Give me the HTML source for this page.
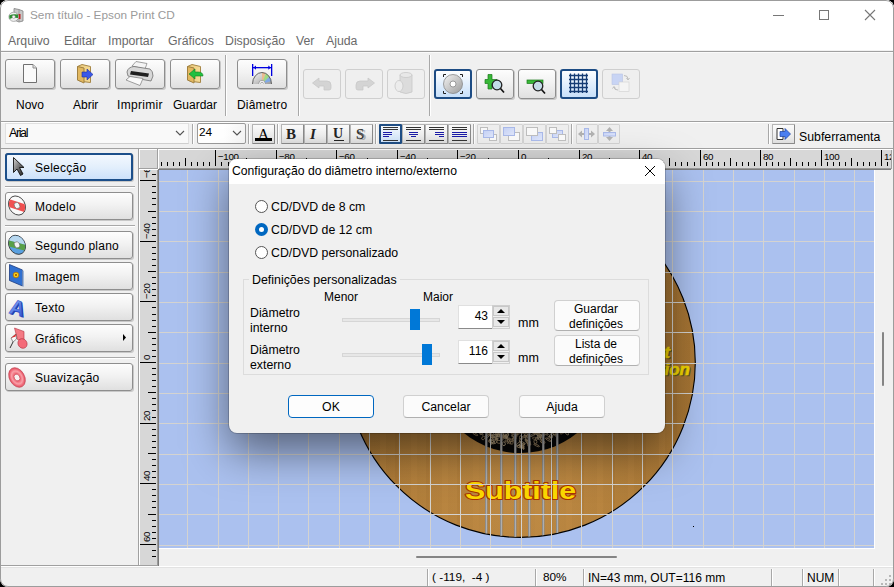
<!DOCTYPE html>
<html><head><meta charset="utf-8">
<style>
*{box-sizing:border-box;margin:0;padding:0}
html,body{width:894px;height:587px;overflow:hidden;background:#000;font-family:"Liberation Sans",sans-serif;}
.a{position:absolute}
#win{position:absolute;left:0;top:0;width:894px;height:587px;background:#f0f0f0;border-radius:8px;overflow:hidden}
#frame{position:absolute;left:0;top:0;width:894px;height:587px;border:1px solid #9c9c9c;border-radius:8px}
.t{position:absolute;white-space:nowrap;line-height:1}
.tb{position:absolute;border:1px solid #8e8e8e;border-radius:3px;background:linear-gradient(#fdfdfd,#f2f2f2 45%,#e0e0e0);box-shadow:1px 1px 0 #c8c8c8}
.tbs{position:absolute;border:2px solid #1d4c84;border-radius:3px;background:linear-gradient(#fdfeff,#e2effd 50%,#c8e0fa)}
.sb{position:absolute;border:1px solid #b4b4b4;border-right-color:#8a8a8a;border-bottom-color:#8a8a8a;border-radius:1px;background:linear-gradient(#fbfbfb,#ededed 60%,#dedede)}
.sbs{position:absolute;border:2px solid #1f4e85;border-radius:1px;background:linear-gradient(#f4f9ff,#d0e4fa)}
.sbd{position:absolute;border:1px solid #d4d4d4;border-radius:1px;background:#efefef}
.tbd{position:absolute;border:1px solid #cfcfcf;border-radius:3px;background:#efefef}
.sep{position:absolute;width:2px;border-left:1px solid #a8a8a8;border-right:1px solid #fff}
.lbl{font-size:12px;color:#000}
</style></head><body>
<div id="win">
<!-- title bar -->
<div class="a" style="left:0;top:0;width:894px;height:51px;background:#fff"></div>
<div class="a" style="left:0;top:50px;width:894px;height:1px;background:#f2f2f2"></div>
<div class="a" style="left:0;top:51px;width:894px;height:1px;background:#a0a0a0"></div>
<div class="a" style="left:0;top:52px;width:894px;height:1px;background:#fafafa"></div>
<div class="t" style="left:30px;top:10px;font-size:11.8px;color:#9a9a9a">Sem título - Epson Print CD</div>
<div class="t" style="left:8px;top:35px;font-size:12.3px;color:#6a6a6a">Arquivo</div>
<div class="t" style="left:64px;top:35px;font-size:12.3px;color:#6a6a6a">Editar</div>
<div class="t" style="left:108px;top:35px;font-size:12.3px;color:#6a6a6a">Importar</div>
<div class="t" style="left:168px;top:35px;font-size:12.3px;color:#6a6a6a">Gráficos</div>
<div class="t" style="left:225px;top:35px;font-size:12.3px;color:#6a6a6a">Disposição</div>
<div class="t" style="left:296px;top:35px;font-size:12.3px;color:#6a6a6a">Ver</div>
<div class="t" style="left:326px;top:35px;font-size:12.3px;color:#6a6a6a">Ajuda</div>

<!-- main toolbar -->
<div class="a" style="left:0;top:121px;width:894px;height:1px;background:#a0a0a0"></div>
<div class="a" style="left:0;top:122px;width:894px;height:1px;background:#fff"></div>
<div class="tb" style="left:5px;top:59px;width:50px;height:30px"></div>
<div class="tb" style="left:60px;top:59px;width:50px;height:30px"></div>
<div class="tb" style="left:115px;top:59px;width:50px;height:30px"></div>
<div class="tb" style="left:170px;top:59px;width:50px;height:30px"></div>
<div class="sep" style="left:225px;top:55px;height:61px"></div>
<div class="tb" style="left:237px;top:59px;width:50px;height:30px"></div>
<div class="sep" style="left:298px;top:55px;height:61px"></div>
<div class="tbd" style="left:303px;top:69px;width:38px;height:30px"></div>
<div class="tbd" style="left:345px;top:69px;width:38px;height:30px"></div>
<div class="tbd" style="left:387px;top:69px;width:38px;height:30px"></div>
<div class="sep" style="left:429px;top:55px;height:61px"></div>
<div class="tbs" style="left:434px;top:69px;width:38px;height:30px"></div>
<div class="tb" style="left:476px;top:69px;width:38px;height:30px"></div>
<div class="tb" style="left:518px;top:69px;width:38px;height:30px"></div>
<div class="tbs" style="left:560px;top:69px;width:38px;height:30px"></div>
<div class="tbd" style="left:602px;top:69px;width:38px;height:30px"></div>
<div class="t lbl" style="left:16px;top:99px">Novo</div>
<div class="t lbl" style="left:73px;top:99px">Abrir</div>
<div class="t lbl" style="left:117px;top:99px;letter-spacing:0.3px">Imprimir</div>
<div class="t lbl" style="left:173px;top:99px">Guardar</div>
<div class="t lbl" style="left:237px;top:99px;letter-spacing:0.2px">Diâmetro</div>

<!-- font row -->
<div class="a" style="left:0;top:148px;width:894px;height:1px;background:#a0a0a0"></div>
<div class="a" style="left:5px;top:123px;width:184px;height:21px;background:#f9f9f9;border:1px solid #e0e0e0;border-bottom-color:#cfcfcf"></div>
<div class="t" style="left:9px;top:127px;font-size:12.5px;letter-spacing:-1.4px;color:#000">Arial</div>
<svg class="a" style="left:175px;top:130px" width="10" height="7"><path d="M1 1L5 5L9 1" stroke="#555" fill="none" stroke-width="1.1"/></svg>
<div class="sep" style="left:192px;top:124px;height:20px"></div>
<div class="a" style="left:197px;top:123px;width:49px;height:21px;background:linear-gradient(90deg,#fff 0,#fff 55%,#f5f5f5);border:1px solid #9a9a9a;border-radius:2px"></div>
<div class="t" style="left:199px;top:127px;font-size:11.8px;color:#000">24</div>
<svg class="a" style="left:232px;top:130px" width="10" height="7"><path d="M1 1L5 5L9 1" stroke="#555" fill="none" stroke-width="1.1"/></svg>
<div class="sep" style="left:248px;top:124px;height:20px"></div>
<div class="sb" style="left:252px;top:124px;width:23px;height:20px"></div>
<div class="sep" style="left:277px;top:124px;height:20px"></div>
<div class="sb" style="left:281px;top:124px;width:23px;height:20px"></div>
<div class="sb" style="left:304px;top:124px;width:23px;height:20px"></div>
<div class="sb" style="left:327px;top:124px;width:23px;height:20px"></div>
<div class="sb" style="left:350px;top:124px;width:23px;height:20px"></div>
<div class="sep" style="left:375px;top:124px;height:20px"></div>
<div class="sbs" style="left:379px;top:124px;width:23px;height:20px"></div>
<div class="sb" style="left:402px;top:124px;width:23px;height:20px"></div>
<div class="sb" style="left:425px;top:124px;width:23px;height:20px"></div>
<div class="sb" style="left:448px;top:124px;width:23px;height:20px"></div>
<div class="sep" style="left:473px;top:124px;height:20px"></div>
<div class="sbd" style="left:477px;top:124px;width:23px;height:20px"></div>
<div class="sbd" style="left:500px;top:124px;width:23px;height:20px"></div>
<div class="sbd" style="left:523px;top:124px;width:23px;height:20px"></div>
<div class="sbd" style="left:546px;top:124px;width:23px;height:20px"></div>
<div class="sep" style="left:571px;top:124px;height:20px"></div>
<div class="sbd" style="left:576px;top:124px;width:22px;height:20px"></div>
<div class="sbd" style="left:598px;top:124px;width:22px;height:20px"></div>
<div class="sep" style="left:768px;top:124px;height:20px"></div>
<div class="sb" style="left:772px;top:124px;width:23px;height:20px"></div>
<div class="t lbl" style="left:799px;top:131px;font-size:12.3px">Subferramenta</div>


<!-- left panel -->
<div class="tb" style="left:5px;top:153px;width:128px;height:28px"></div>
<div class="a" style="left:5px;top:153px;width:128px;height:28px;border:2px solid #1c4f8a;border-radius:3px;background:linear-gradient(#f3f8fe,#e3effc 50%,#cde2fb)"></div>
<div class="a" style="left:5px;top:186px;width:130px;height:1px;background:#a8a8a8"></div>
<div class="a" style="left:5px;top:187px;width:130px;height:1px;background:#fff"></div>
<div class="tb" style="left:5px;top:192px;width:128px;height:28px"></div>
<div class="a" style="left:5px;top:225px;width:130px;height:1px;background:#a8a8a8"></div>
<div class="a" style="left:5px;top:226px;width:130px;height:1px;background:#fff"></div>
<div class="tb" style="left:5px;top:231px;width:128px;height:28px"></div>
<div class="tb" style="left:5px;top:262px;width:128px;height:28px"></div>
<div class="tb" style="left:5px;top:293px;width:128px;height:28px"></div>
<div class="tb" style="left:5px;top:324px;width:128px;height:28px"></div>
<div class="a" style="left:5px;top:357px;width:130px;height:1px;background:#a8a8a8"></div>
<div class="a" style="left:5px;top:358px;width:130px;height:1px;background:#fff"></div>
<div class="tb" style="left:5px;top:363px;width:128px;height:28px"></div>
<div class="t lbl" style="left:35px;top:162px;letter-spacing:0.25px">Selecção</div>
<div class="t lbl" style="left:35px;top:201px;letter-spacing:0.25px">Modelo</div>
<div class="t lbl" style="left:35px;top:240px;letter-spacing:0.25px">Segundo plano</div>
<div class="t lbl" style="left:35px;top:271px;letter-spacing:0.25px">Imagem</div>
<div class="t lbl" style="left:35px;top:302px;letter-spacing:0.25px">Texto</div>
<div class="t lbl" style="left:35px;top:333px;letter-spacing:0.25px">Gráficos</div>
<div class="t lbl" style="left:35px;top:372px;letter-spacing:0.25px">Suavização</div>
<svg class="a" style="left:122px;top:334px" width="5" height="7"><path d="M1 0L4 3.5L1 7Z" fill="#000"/></svg>
<!-- main area border -->
<div class="a" style="left:138px;top:149px;width:1px;height:417px;background:#a0a0a0"></div>
<div class="a" style="left:139px;top:149px;width:755px;height:1px;background:#fff"></div>
<div class="a" style="left:139px;top:149px;width:1px;height:417px;background:#fff"></div>
<!-- rulers -->
<div class="a" style="left:140px;top:150px;width:751px;height:18px;background:#d7d7d7"></div>
<div class="a" style="left:140px;top:150px;width:17px;height:415px;background:#d7d7d7"></div>
<div class="a" style="left:157px;top:149px;width:1px;height:20px;background:#a0a0a0"></div>
<div class="a" style="left:158px;top:149px;width:1px;height:20px;background:#fff"></div>
<div class="a" style="left:139px;top:168px;width:19px;height:1px;background:#a0a0a0"></div>
<div class="a" style="left:139px;top:169px;width:19px;height:1px;background:#fff"></div>
<div class="a" style="left:159px;top:168px;width:732px;height:1px;background:#9a9a9a"></div>
<div class="a" style="left:158px;top:169px;width:733px;height:1px;background:#7a7a7a"></div>
<div class="a" style="left:891px;top:150px;width:1px;height:19px;background:#a0a0a0"></div>
<div class="a" style="left:157px;top:170px;width:1px;height:395px;background:#9a9a9a"></div>
<div class="a" style="left:158px;top:170px;width:1px;height:396px;background:#7a7a7a"></div>
<div class="a" style="left:0;top:565px;width:158px;height:1px;background:#a0a0a0"></div>
<div class="a" style="left:159px;top:548px;width:715px;height:1px;background:#fff"></div>
<div class="a" style="left:874px;top:170px;width:1px;height:379px;background:#fff"></div>
<!-- canvas -->
<svg class="a" style="left:159px;top:170px" width="715" height="378">
<rect x="0" y="0" width="715" height="378" fill="#abc1ef"/>
<defs>
<radialGradient id="wood" cx="0.5" cy="0.85" r="0.75"><stop offset="0" stop-color="#bb853c"/><stop offset="0.6" stop-color="#b27d37"/><stop offset="1" stop-color="#ae7a36"/></radialGradient>
<linearGradient id="woodh" x1="0" y1="0" x2="1" y2="0"><stop offset="0" stop-color="#000" stop-opacity="0.06"/><stop offset="0.5" stop-color="#fff" stop-opacity="0.04"/><stop offset="1" stop-color="#000" stop-opacity="0.06"/></linearGradient>
<pattern id="grain" width="31" height="400" patternUnits="userSpaceOnUse">
<rect x="4" width="6" height="400" fill="#c8924a" opacity="0.18"/><rect x="19" width="3" height="400" fill="#8a5a24" opacity="0.12"/></pattern>
<linearGradient id="str" x1="0" y1="0" x2="1" y2="0"><stop offset="0" stop-color="#707070"/><stop offset="0.5" stop-color="#b8b8b8"/><stop offset="1" stop-color="#888"/></linearGradient>

<clipPath id="cdclip"><circle cx="361.5" cy="192.60000000000002" r="174.3"/></clipPath></defs>
<circle cx="361.5" cy="192.60000000000002" r="174.8" fill="url(#wood)"/>
<circle cx="361.5" cy="192.60000000000002" r="174.8" fill="url(#woodh)"/>
<circle cx="361.5" cy="192.60000000000002" r="174.8" fill="url(#grain)"/>
<circle cx="361.5" cy="192.60000000000002" r="174.8" fill="none" stroke="#000" stroke-width="1.1"/>
<circle cx="361.5" cy="192.60000000000002" r="90.5" fill="#080808"/>
<g opacity="0.9"><ellipse cx="355.4" cy="262.6" rx="1.3" ry="1.1" transform="rotate(7 355.4 262.6)" fill="none" stroke="#a88e68" stroke-width="0.8"/><ellipse cx="374.9" cy="258.7" rx="2.3" ry="0.7" transform="rotate(102 374.9 258.7)" fill="none" stroke="#bfa37a" stroke-width="0.8"/><ellipse cx="337.9" cy="263.9" rx="1.3" ry="1.2" transform="rotate(9 337.9 263.9)" fill="none" stroke="#bfa37a" stroke-width="0.8"/><ellipse cx="346.4" cy="267.5" rx="1.9" ry="1.1" transform="rotate(11 346.4 267.5)" fill="none" stroke="#cdb48a" stroke-width="0.8"/><ellipse cx="340.5" cy="262.7" rx="2.3" ry="1.4" transform="rotate(84 340.5 262.7)" fill="none" stroke="#a88e68" stroke-width="0.8"/><ellipse cx="362.3" cy="262.3" rx="2.1" ry="1.2" transform="rotate(13 362.3 262.3)" fill="none" stroke="#a88e68" stroke-width="0.8"/><ellipse cx="350.2" cy="271.6" rx="2.8" ry="0.9" transform="rotate(63 350.2 271.6)" fill="none" stroke="#a88e68" stroke-width="0.8"/><ellipse cx="347.5" cy="263.5" rx="2.9" ry="1.5" transform="rotate(85 347.5 263.5)" fill="none" stroke="#cdb48a" stroke-width="0.8"/><ellipse cx="331.8" cy="271.6" rx="2.8" ry="0.9" transform="rotate(69 331.8 271.6)" fill="none" stroke="#d8c29c" stroke-width="0.8"/><ellipse cx="383.0" cy="271.3" rx="1.4" ry="1.0" transform="rotate(99 383.0 271.3)" fill="none" stroke="#bfa37a" stroke-width="0.8"/><ellipse cx="389.2" cy="269.7" rx="3.1" ry="0.8" transform="rotate(32 389.2 269.7)" fill="none" stroke="#bfa37a" stroke-width="0.8"/><ellipse cx="355.1" cy="268.1" rx="1.8" ry="0.7" transform="rotate(155 355.1 268.1)" fill="none" stroke="#cdb48a" stroke-width="0.8"/><ellipse cx="370.1" cy="273.7" rx="3.1" ry="1.3" transform="rotate(101 370.1 273.7)" fill="none" stroke="#a88e68" stroke-width="0.8"/><ellipse cx="405.3" cy="260.3" rx="1.5" ry="0.6" transform="rotate(171 405.3 260.3)" fill="none" stroke="#d8c29c" stroke-width="0.8"/><ellipse cx="358.5" cy="262.5" rx="1.3" ry="0.6" transform="rotate(50 358.5 262.5)" fill="none" stroke="#d8c29c" stroke-width="0.8"/><ellipse cx="391.3" cy="267.1" rx="2.6" ry="0.9" transform="rotate(175 391.3 267.1)" fill="none" stroke="#cdb48a" stroke-width="0.8"/><ellipse cx="336.9" cy="271.1" rx="2.9" ry="1.1" transform="rotate(118 336.9 271.1)" fill="none" stroke="#cdb48a" stroke-width="0.8"/><ellipse cx="382.5" cy="267.7" rx="1.6" ry="1.5" transform="rotate(78 382.5 267.7)" fill="none" stroke="#d8c29c" stroke-width="0.8"/><ellipse cx="368.0" cy="269.1" rx="2.4" ry="1.2" transform="rotate(85 368.0 269.1)" fill="none" stroke="#d8c29c" stroke-width="0.8"/><ellipse cx="352.8" cy="272.9" rx="1.3" ry="1.3" transform="rotate(162 352.8 272.9)" fill="none" stroke="#a88e68" stroke-width="0.8"/><ellipse cx="359.4" cy="274.2" rx="2.8" ry="1.2" transform="rotate(140 359.4 274.2)" fill="none" stroke="#bfa37a" stroke-width="0.8"/><ellipse cx="391.9" cy="259.7" rx="2.3" ry="1.4" transform="rotate(19 391.9 259.7)" fill="none" stroke="#cdb48a" stroke-width="0.8"/><ellipse cx="349.6" cy="270.8" rx="3.0" ry="1.0" transform="rotate(110 349.6 270.8)" fill="none" stroke="#bfa37a" stroke-width="0.8"/><ellipse cx="355.6" cy="265.1" rx="3.1" ry="1.3" transform="rotate(158 355.6 265.1)" fill="none" stroke="#d8c29c" stroke-width="0.8"/><ellipse cx="375.8" cy="262.0" rx="1.8" ry="1.3" transform="rotate(77 375.8 262.0)" fill="none" stroke="#bfa37a" stroke-width="0.8"/><ellipse cx="329.5" cy="265.5" rx="3.0" ry="0.8" transform="rotate(129 329.5 265.5)" fill="none" stroke="#d8c29c" stroke-width="0.8"/><ellipse cx="364.1" cy="276.8" rx="2.9" ry="0.8" transform="rotate(78 364.1 276.8)" fill="none" stroke="#a88e68" stroke-width="0.8"/><ellipse cx="395.1" cy="263.3" rx="1.2" ry="1.2" transform="rotate(79 395.1 263.3)" fill="none" stroke="#cdb48a" stroke-width="0.8"/><ellipse cx="382.0" cy="263.3" rx="1.8" ry="1.6" transform="rotate(20 382.0 263.3)" fill="none" stroke="#bfa37a" stroke-width="0.8"/><ellipse cx="390.0" cy="261.4" rx="3.1" ry="0.9" transform="rotate(23 390.0 261.4)" fill="none" stroke="#bfa37a" stroke-width="0.8"/><ellipse cx="356.4" cy="259.0" rx="2.1" ry="1.3" transform="rotate(49 356.4 259.0)" fill="none" stroke="#cdb48a" stroke-width="0.8"/><ellipse cx="332.6" cy="263.6" rx="2.5" ry="1.1" transform="rotate(160 332.6 263.6)" fill="none" stroke="#d8c29c" stroke-width="0.8"/><ellipse cx="324.3" cy="268.0" rx="1.9" ry="1.4" transform="rotate(127 324.3 268.0)" fill="none" stroke="#bfa37a" stroke-width="0.8"/><ellipse cx="377.6" cy="260.5" rx="1.3" ry="0.7" transform="rotate(13 377.6 260.5)" fill="none" stroke="#d8c29c" stroke-width="0.8"/><ellipse cx="360.3" cy="276.4" rx="2.4" ry="1.3" transform="rotate(8 360.3 276.4)" fill="none" stroke="#bfa37a" stroke-width="0.8"/><ellipse cx="407.2" cy="262.6" rx="3.1" ry="1.1" transform="rotate(44 407.2 262.6)" fill="none" stroke="#d8c29c" stroke-width="0.8"/><ellipse cx="401.0" cy="258.4" rx="1.7" ry="1.4" transform="rotate(16 401.0 258.4)" fill="none" stroke="#cdb48a" stroke-width="0.8"/><ellipse cx="379.1" cy="259.0" rx="2.5" ry="0.7" transform="rotate(172 379.1 259.0)" fill="none" stroke="#bfa37a" stroke-width="0.8"/><ellipse cx="332.2" cy="265.0" rx="3.0" ry="1.0" transform="rotate(59 332.2 265.0)" fill="none" stroke="#a88e68" stroke-width="0.8"/><ellipse cx="337.5" cy="267.3" rx="2.8" ry="0.7" transform="rotate(94 337.5 267.3)" fill="none" stroke="#cdb48a" stroke-width="0.8"/><ellipse cx="338.1" cy="265.0" rx="2.6" ry="1.1" transform="rotate(1 338.1 265.0)" fill="none" stroke="#cdb48a" stroke-width="0.8"/><ellipse cx="354.9" cy="269.2" rx="1.3" ry="1.3" transform="rotate(45 354.9 269.2)" fill="none" stroke="#cdb48a" stroke-width="0.8"/><ellipse cx="335.6" cy="260.2" rx="2.9" ry="0.7" transform="rotate(164 335.6 260.2)" fill="none" stroke="#d8c29c" stroke-width="0.8"/><ellipse cx="329.8" cy="263.4" rx="2.6" ry="0.9" transform="rotate(93 329.8 263.4)" fill="none" stroke="#a88e68" stroke-width="0.8"/><ellipse cx="368.1" cy="271.6" rx="3.2" ry="1.1" transform="rotate(56 368.1 271.6)" fill="none" stroke="#cdb48a" stroke-width="0.8"/><ellipse cx="369.6" cy="272.6" rx="3.1" ry="1.0" transform="rotate(48 369.6 272.6)" fill="none" stroke="#bfa37a" stroke-width="0.8"/><ellipse cx="386.9" cy="263.8" rx="2.5" ry="0.9" transform="rotate(20 386.9 263.8)" fill="none" stroke="#d8c29c" stroke-width="0.8"/><ellipse cx="369.8" cy="260.9" rx="1.5" ry="0.9" transform="rotate(57 369.8 260.9)" fill="none" stroke="#d8c29c" stroke-width="0.8"/><ellipse cx="383.3" cy="260.0" rx="3.2" ry="1.2" transform="rotate(65 383.3 260.0)" fill="none" stroke="#a88e68" stroke-width="0.8"/><ellipse cx="314.0" cy="258.5" rx="1.8" ry="0.7" transform="rotate(119 314.0 258.5)" fill="none" stroke="#bfa37a" stroke-width="0.8"/><ellipse cx="359.7" cy="258.8" rx="1.9" ry="1.6" transform="rotate(159 359.7 258.8)" fill="none" stroke="#a88e68" stroke-width="0.8"/><ellipse cx="352.1" cy="270.2" rx="1.3" ry="1.3" transform="rotate(81 352.1 270.2)" fill="none" stroke="#bfa37a" stroke-width="0.8"/><ellipse cx="315.2" cy="262.6" rx="1.7" ry="1.3" transform="rotate(54 315.2 262.6)" fill="none" stroke="#a88e68" stroke-width="0.8"/><ellipse cx="369.5" cy="261.6" rx="2.7" ry="1.0" transform="rotate(99 369.5 261.6)" fill="none" stroke="#bfa37a" stroke-width="0.8"/><ellipse cx="376.6" cy="262.3" rx="2.2" ry="1.0" transform="rotate(61 376.6 262.3)" fill="none" stroke="#cdb48a" stroke-width="0.8"/><ellipse cx="361.8" cy="267.5" rx="1.9" ry="1.3" transform="rotate(95 361.8 267.5)" fill="none" stroke="#bfa37a" stroke-width="0.8"/><ellipse cx="382.8" cy="266.1" rx="2.1" ry="0.9" transform="rotate(147 382.8 266.1)" fill="none" stroke="#cdb48a" stroke-width="0.8"/><ellipse cx="367.1" cy="264.5" rx="2.8" ry="0.8" transform="rotate(27 367.1 264.5)" fill="none" stroke="#cdb48a" stroke-width="0.8"/><ellipse cx="333.6" cy="266.7" rx="2.1" ry="1.2" transform="rotate(7 333.6 266.7)" fill="none" stroke="#bfa37a" stroke-width="0.8"/><ellipse cx="411.8" cy="258.3" rx="2.5" ry="0.9" transform="rotate(23 411.8 258.3)" fill="none" stroke="#d8c29c" stroke-width="0.8"/><ellipse cx="356.5" cy="264.3" rx="2.7" ry="0.7" transform="rotate(54 356.5 264.3)" fill="none" stroke="#bfa37a" stroke-width="0.8"/><ellipse cx="361.8" cy="269.8" rx="2.0" ry="0.9" transform="rotate(120 361.8 269.8)" fill="none" stroke="#d8c29c" stroke-width="0.8"/><ellipse cx="389.0" cy="258.5" rx="2.6" ry="0.8" transform="rotate(143 389.0 258.5)" fill="none" stroke="#cdb48a" stroke-width="0.8"/><ellipse cx="397.2" cy="264.7" rx="1.7" ry="0.8" transform="rotate(137 397.2 264.7)" fill="none" stroke="#d8c29c" stroke-width="0.8"/><ellipse cx="339.7" cy="271.8" rx="2.2" ry="1.5" transform="rotate(10 339.7 271.8)" fill="none" stroke="#bfa37a" stroke-width="0.8"/><ellipse cx="377.5" cy="268.9" rx="1.6" ry="1.0" transform="rotate(128 377.5 268.9)" fill="none" stroke="#d8c29c" stroke-width="0.8"/><ellipse cx="316.0" cy="263.8" rx="3.1" ry="0.9" transform="rotate(33 316.0 263.8)" fill="none" stroke="#a88e68" stroke-width="0.8"/><ellipse cx="382.1" cy="259.9" rx="1.9" ry="0.8" transform="rotate(1 382.1 259.9)" fill="none" stroke="#d8c29c" stroke-width="0.8"/><ellipse cx="354.2" cy="264.3" rx="1.8" ry="1.3" transform="rotate(85 354.2 264.3)" fill="none" stroke="#a88e68" stroke-width="0.8"/><ellipse cx="377.7" cy="261.2" rx="2.1" ry="1.4" transform="rotate(11 377.7 261.2)" fill="none" stroke="#bfa37a" stroke-width="0.8"/><ellipse cx="314.8" cy="260.3" rx="1.9" ry="0.9" transform="rotate(172 314.8 260.3)" fill="none" stroke="#cdb48a" stroke-width="0.8"/><ellipse cx="374.0" cy="264.6" rx="3.1" ry="0.8" transform="rotate(144 374.0 264.6)" fill="none" stroke="#d8c29c" stroke-width="0.8"/><ellipse cx="343.5" cy="259.6" rx="1.8" ry="1.0" transform="rotate(141 343.5 259.6)" fill="none" stroke="#cdb48a" stroke-width="0.8"/><ellipse cx="359.4" cy="263.4" rx="1.5" ry="1.0" transform="rotate(117 359.4 263.4)" fill="none" stroke="#a88e68" stroke-width="0.8"/><ellipse cx="352.6" cy="261.4" rx="3.2" ry="1.5" transform="rotate(178 352.6 261.4)" fill="none" stroke="#d8c29c" stroke-width="0.8"/><ellipse cx="377.6" cy="275.3" rx="3.1" ry="0.8" transform="rotate(24 377.6 275.3)" fill="none" stroke="#a88e68" stroke-width="0.8"/><ellipse cx="339.1" cy="266.5" rx="2.7" ry="1.4" transform="rotate(120 339.1 266.5)" fill="none" stroke="#cdb48a" stroke-width="0.8"/><ellipse cx="371.3" cy="258.1" rx="1.7" ry="0.9" transform="rotate(163 371.3 258.1)" fill="none" stroke="#bfa37a" stroke-width="0.8"/><ellipse cx="330.7" cy="271.0" rx="1.4" ry="1.1" transform="rotate(147 330.7 271.0)" fill="none" stroke="#a88e68" stroke-width="0.8"/><ellipse cx="344.8" cy="273.8" rx="1.9" ry="1.5" transform="rotate(81 344.8 273.8)" fill="none" stroke="#d8c29c" stroke-width="0.8"/><ellipse cx="384.9" cy="264.9" rx="1.4" ry="0.6" transform="rotate(89 384.9 264.9)" fill="none" stroke="#a88e68" stroke-width="0.8"/><ellipse cx="380.3" cy="264.6" rx="2.5" ry="0.7" transform="rotate(29 380.3 264.6)" fill="none" stroke="#d8c29c" stroke-width="0.8"/><ellipse cx="376.4" cy="259.3" rx="1.8" ry="1.6" transform="rotate(56 376.4 259.3)" fill="none" stroke="#d8c29c" stroke-width="0.8"/><ellipse cx="337.0" cy="259.0" rx="2.0" ry="1.5" transform="rotate(78 337.0 259.0)" fill="none" stroke="#bfa37a" stroke-width="0.8"/><ellipse cx="376.4" cy="271.7" rx="2.0" ry="1.5" transform="rotate(83 376.4 271.7)" fill="none" stroke="#bfa37a" stroke-width="0.8"/><ellipse cx="380.2" cy="265.1" rx="3.1" ry="1.3" transform="rotate(31 380.2 265.1)" fill="none" stroke="#d8c29c" stroke-width="0.8"/><ellipse cx="363.4" cy="272.7" rx="3.1" ry="0.8" transform="rotate(23 363.4 272.7)" fill="none" stroke="#cdb48a" stroke-width="0.8"/><ellipse cx="383.8" cy="271.9" rx="2.4" ry="1.4" transform="rotate(29 383.8 271.9)" fill="none" stroke="#bfa37a" stroke-width="0.8"/><ellipse cx="339.4" cy="265.1" rx="1.6" ry="1.1" transform="rotate(102 339.4 265.1)" fill="none" stroke="#cdb48a" stroke-width="0.8"/><ellipse cx="379.4" cy="264.1" rx="2.0" ry="0.7" transform="rotate(44 379.4 264.1)" fill="none" stroke="#bfa37a" stroke-width="0.8"/><ellipse cx="343.6" cy="264.8" rx="2.5" ry="0.9" transform="rotate(76 343.6 264.8)" fill="none" stroke="#bfa37a" stroke-width="0.8"/><ellipse cx="375.4" cy="268.2" rx="2.1" ry="1.0" transform="rotate(4 375.4 268.2)" fill="none" stroke="#a88e68" stroke-width="0.8"/><ellipse cx="367.6" cy="264.4" rx="2.4" ry="1.4" transform="rotate(151 367.6 264.4)" fill="none" stroke="#a88e68" stroke-width="0.8"/><ellipse cx="385.3" cy="258.7" rx="2.8" ry="1.1" transform="rotate(118 385.3 258.7)" fill="none" stroke="#cdb48a" stroke-width="0.8"/><ellipse cx="318.6" cy="259.5" rx="2.2" ry="0.7" transform="rotate(91 318.6 259.5)" fill="none" stroke="#a88e68" stroke-width="0.8"/><ellipse cx="332.5" cy="266.8" rx="1.3" ry="0.7" transform="rotate(111 332.5 266.8)" fill="none" stroke="#cdb48a" stroke-width="0.8"/><ellipse cx="363.2" cy="276.1" rx="3.0" ry="0.8" transform="rotate(142 363.2 276.1)" fill="none" stroke="#bfa37a" stroke-width="0.8"/><ellipse cx="361.1" cy="275.3" rx="1.6" ry="0.9" transform="rotate(91 361.1 275.3)" fill="none" stroke="#d8c29c" stroke-width="0.8"/><ellipse cx="379.3" cy="266.8" rx="1.8" ry="0.9" transform="rotate(68 379.3 266.8)" fill="none" stroke="#d8c29c" stroke-width="0.8"/><ellipse cx="338.6" cy="258.8" rx="2.9" ry="1.2" transform="rotate(104 338.6 258.8)" fill="none" stroke="#cdb48a" stroke-width="0.8"/><ellipse cx="383.3" cy="259.6" rx="1.9" ry="0.7" transform="rotate(60 383.3 259.6)" fill="none" stroke="#cdb48a" stroke-width="0.8"/><ellipse cx="333.4" cy="271.9" rx="2.4" ry="1.3" transform="rotate(56 333.4 271.9)" fill="none" stroke="#cdb48a" stroke-width="0.8"/><ellipse cx="398.7" cy="259.0" rx="2.0" ry="1.0" transform="rotate(9 398.7 259.0)" fill="none" stroke="#a88e68" stroke-width="0.8"/><ellipse cx="346.2" cy="266.3" rx="1.6" ry="1.2" transform="rotate(85 346.2 266.3)" fill="none" stroke="#bfa37a" stroke-width="0.8"/><ellipse cx="347.1" cy="266.8" rx="2.2" ry="1.1" transform="rotate(30 347.1 266.8)" fill="none" stroke="#cdb48a" stroke-width="0.8"/><ellipse cx="376.8" cy="258.2" rx="1.3" ry="1.4" transform="rotate(2 376.8 258.2)" fill="none" stroke="#bfa37a" stroke-width="0.8"/><ellipse cx="342.3" cy="263.5" rx="2.5" ry="1.4" transform="rotate(31 342.3 263.5)" fill="none" stroke="#d8c29c" stroke-width="0.8"/><ellipse cx="365.5" cy="266.6" rx="2.0" ry="1.0" transform="rotate(164 365.5 266.6)" fill="none" stroke="#cdb48a" stroke-width="0.8"/><ellipse cx="392.4" cy="265.2" rx="2.6" ry="1.4" transform="rotate(128 392.4 265.2)" fill="none" stroke="#d8c29c" stroke-width="0.8"/><ellipse cx="336.3" cy="265.7" rx="2.6" ry="1.5" transform="rotate(175 336.3 265.7)" fill="none" stroke="#d8c29c" stroke-width="0.8"/><ellipse cx="333.0" cy="271.3" rx="1.6" ry="1.5" transform="rotate(3 333.0 271.3)" fill="none" stroke="#d8c29c" stroke-width="0.8"/><ellipse cx="381.8" cy="265.4" rx="2.0" ry="1.5" transform="rotate(166 381.8 265.4)" fill="none" stroke="#a88e68" stroke-width="0.8"/><ellipse cx="366.5" cy="266.4" rx="1.2" ry="0.6" transform="rotate(172 366.5 266.4)" fill="none" stroke="#bfa37a" stroke-width="0.8"/><ellipse cx="349.7" cy="260.5" rx="1.6" ry="1.2" transform="rotate(14 349.7 260.5)" fill="none" stroke="#bfa37a" stroke-width="0.8"/><ellipse cx="326.9" cy="260.6" rx="2.6" ry="1.3" transform="rotate(12 326.9 260.6)" fill="none" stroke="#d8c29c" stroke-width="0.8"/><ellipse cx="355.1" cy="269.3" rx="3.0" ry="1.4" transform="rotate(128 355.1 269.3)" fill="none" stroke="#a88e68" stroke-width="0.8"/><ellipse cx="335.6" cy="268.9" rx="2.5" ry="0.9" transform="rotate(18 335.6 268.9)" fill="none" stroke="#cdb48a" stroke-width="0.8"/><ellipse cx="312.6" cy="259.0" rx="2.7" ry="1.2" transform="rotate(86 312.6 259.0)" fill="none" stroke="#d8c29c" stroke-width="0.8"/><ellipse cx="376.7" cy="262.8" rx="2.7" ry="0.9" transform="rotate(127 376.7 262.8)" fill="none" stroke="#bfa37a" stroke-width="0.8"/><ellipse cx="321.2" cy="262.4" rx="2.3" ry="0.9" transform="rotate(78 321.2 262.4)" fill="none" stroke="#bfa37a" stroke-width="0.8"/><ellipse cx="400.5" cy="261.2" rx="1.3" ry="0.9" transform="rotate(17 400.5 261.2)" fill="none" stroke="#bfa37a" stroke-width="0.8"/><ellipse cx="363.5" cy="276.9" rx="2.3" ry="0.7" transform="rotate(59 363.5 276.9)" fill="none" stroke="#cdb48a" stroke-width="0.8"/><ellipse cx="378.4" cy="261.4" rx="3.0" ry="0.7" transform="rotate(160 378.4 261.4)" fill="none" stroke="#cdb48a" stroke-width="0.8"/><ellipse cx="382.7" cy="258.1" rx="2.1" ry="1.1" transform="rotate(31 382.7 258.1)" fill="none" stroke="#bfa37a" stroke-width="0.8"/><ellipse cx="343.8" cy="268.1" rx="2.4" ry="0.6" transform="rotate(105 343.8 268.1)" fill="none" stroke="#bfa37a" stroke-width="0.8"/><ellipse cx="352.4" cy="261.3" rx="2.1" ry="1.3" transform="rotate(46 352.4 261.3)" fill="none" stroke="#bfa37a" stroke-width="0.8"/><ellipse cx="322.9" cy="263.8" rx="1.5" ry="0.8" transform="rotate(45 322.9 263.8)" fill="none" stroke="#d8c29c" stroke-width="0.8"/><ellipse cx="344.1" cy="260.2" rx="1.7" ry="1.6" transform="rotate(47 344.1 260.2)" fill="none" stroke="#cdb48a" stroke-width="0.8"/><ellipse cx="403.3" cy="263.0" rx="2.1" ry="0.6" transform="rotate(154 403.3 263.0)" fill="none" stroke="#a88e68" stroke-width="0.8"/><ellipse cx="338.5" cy="261.3" rx="1.5" ry="1.2" transform="rotate(73 338.5 261.3)" fill="none" stroke="#bfa37a" stroke-width="0.8"/><ellipse cx="347.3" cy="270.2" rx="2.0" ry="0.8" transform="rotate(130 347.3 270.2)" fill="none" stroke="#bfa37a" stroke-width="0.8"/><ellipse cx="329.0" cy="261.8" rx="2.1" ry="0.9" transform="rotate(113 329.0 261.8)" fill="none" stroke="#cdb48a" stroke-width="0.8"/><ellipse cx="380.4" cy="268.3" rx="1.5" ry="1.4" transform="rotate(87 380.4 268.3)" fill="none" stroke="#cdb48a" stroke-width="0.8"/><ellipse cx="340.7" cy="260.7" rx="2.6" ry="1.5" transform="rotate(33 340.7 260.7)" fill="none" stroke="#d8c29c" stroke-width="0.8"/><ellipse cx="363.6" cy="276.5" rx="1.3" ry="1.1" transform="rotate(29 363.6 276.5)" fill="none" stroke="#bfa37a" stroke-width="0.8"/><ellipse cx="348.1" cy="265.5" rx="2.6" ry="1.1" transform="rotate(115 348.1 265.5)" fill="none" stroke="#d8c29c" stroke-width="0.8"/><ellipse cx="357.7" cy="263.7" rx="3.1" ry="0.8" transform="rotate(123 357.7 263.7)" fill="none" stroke="#a88e68" stroke-width="0.8"/></g>
<rect x="326" y="17.80000000000001" width="2.5" height="349.6" fill="url(#str)" clip-path="url(#cdclip)"/>
<rect x="341" y="17.80000000000001" width="2.5" height="349.6" fill="url(#str)" clip-path="url(#cdclip)"/>
<rect x="355" y="17.80000000000001" width="2.5" height="349.6" fill="url(#str)" clip-path="url(#cdclip)"/>
<rect x="369" y="17.80000000000001" width="2.5" height="349.6" fill="url(#str)" clip-path="url(#cdclip)"/>
<rect x="383" y="17.80000000000001" width="2.5" height="349.6" fill="url(#str)" clip-path="url(#cdclip)"/>
<rect x="397" y="17.80000000000001" width="2.5" height="349.6" fill="url(#str)" clip-path="url(#cdclip)"/>
<text x="306" y="329" textLength="111" lengthAdjust="spacingAndGlyphs" font-family="Liberation Sans" font-weight="bold" font-size="23" fill="#fcd800" stroke="#a83400" stroke-width="2" paint-order="stroke" stroke-linejoin="round">Subtitle</text>
<text x="532.2" y="206.2" text-anchor="end" font-family="Liberation Sans" font-weight="bold" font-style="italic" font-size="17" fill="#5a5a18" stroke="#5a5a18" stroke-width="0.6">tion</text>
<text x="512.2" y="189.2" text-anchor="end" font-family="Liberation Sans" font-weight="bold" font-style="italic" font-size="17" fill="#5a5a18" stroke="#5a5a18" stroke-width="0.6">st</text>
<text x="531" y="205" text-anchor="end" font-family="Liberation Sans" font-weight="bold" font-style="italic" font-size="17" fill="#f4d800" stroke="#f4d800" stroke-width="0.6">tion</text>
<text x="511" y="188" text-anchor="end" font-family="Liberation Sans" font-weight="bold" font-style="italic" font-size="17" fill="#f4d800" stroke="#f4d800" stroke-width="0.6">st</text>
<rect x="28" y="0" width="1" height="378" fill="#d4d3d0"/>
<rect x="59" y="0" width="1" height="378" fill="#d4d3d0"/>
<rect x="89" y="0" width="1" height="378" fill="#d4d3d0"/>
<rect x="119" y="0" width="1" height="378" fill="#d4d3d0"/>
<rect x="149" y="0" width="1" height="378" fill="#d4d3d0"/>
<rect x="180" y="0" width="1" height="378" fill="#d4d3d0"/>
<rect x="210" y="0" width="1" height="378" fill="#d4d3d0"/>
<rect x="240" y="0" width="1" height="378" fill="#d4d3d0"/>
<rect x="271" y="0" width="1" height="378" fill="#d4d3d0"/>
<rect x="301" y="0" width="1" height="378" fill="#d4d3d0"/>
<rect x="331" y="0" width="1" height="378" fill="#d4d3d0"/>
<rect x="362" y="0" width="1" height="378" fill="#d4d3d0"/>
<rect x="392" y="0" width="1" height="378" fill="#d4d3d0"/>
<rect x="422" y="0" width="1" height="378" fill="#d4d3d0"/>
<rect x="453" y="0" width="1" height="378" fill="#d4d3d0"/>
<rect x="483" y="0" width="1" height="378" fill="#d4d3d0"/>
<rect x="513" y="0" width="1" height="378" fill="#d4d3d0"/>
<rect x="544" y="0" width="1" height="378" fill="#d4d3d0"/>
<rect x="574" y="0" width="1" height="378" fill="#d4d3d0"/>
<rect x="604" y="0" width="1" height="378" fill="#d4d3d0"/>
<rect x="635" y="0" width="1" height="378" fill="#d4d3d0"/>
<rect x="665" y="0" width="1" height="378" fill="#d4d3d0"/>
<rect x="695" y="0" width="1" height="378" fill="#d4d3d0"/>
<rect x="0" y="11" width="715" height="1" fill="#d4d3d0"/>
<rect x="0" y="41" width="715" height="1" fill="#d4d3d0"/>
<rect x="0" y="71" width="715" height="1" fill="#d4d3d0"/>
<rect x="0" y="102" width="715" height="1" fill="#d4d3d0"/>
<rect x="0" y="132" width="715" height="1" fill="#d4d3d0"/>
<rect x="0" y="162" width="715" height="1" fill="#d4d3d0"/>
<rect x="0" y="193" width="715" height="1" fill="#d4d3d0"/>
<rect x="0" y="223" width="715" height="1" fill="#d4d3d0"/>
<rect x="0" y="253" width="715" height="1" fill="#d4d3d0"/>
<rect x="0" y="284" width="715" height="1" fill="#d4d3d0"/>
<rect x="0" y="314" width="715" height="1" fill="#d4d3d0"/>
<rect x="0" y="344" width="715" height="1" fill="#d4d3d0"/>
<rect x="0" y="375" width="715" height="1" fill="#d4d3d0"/>
<rect x="534" y="356" width="1" height="1" fill="#000"/>
</svg>
<svg class="a" style="left:0;top:0" width="894" height="587"><defs><clipPath id="vrc"><rect x="139" y="170" width="19" height="395"/></clipPath><clipPath id="hrc"><rect x="159" y="150" width="732" height="18"/></clipPath></defs><g clip-path="url(#hrc)">
<rect x="161" y="162" width="1" height="4" fill="#000"/>
<rect x="167" y="162" width="1" height="4" fill="#000"/>
<rect x="173" y="162" width="1" height="4" fill="#000"/>
<rect x="179" y="162" width="1" height="4" fill="#000"/>
<rect x="185" y="158" width="1" height="8" fill="#000"/>
<rect x="191" y="162" width="1" height="4" fill="#000"/>
<rect x="197" y="162" width="1" height="4" fill="#000"/>
<rect x="203" y="162" width="1" height="4" fill="#000"/>
<rect x="209" y="162" width="1" height="4" fill="#000"/>
<rect x="215" y="150" width="1" height="16" fill="#000"/>
<rect x="221" y="162" width="1" height="4" fill="#000"/>
<rect x="228" y="162" width="1" height="4" fill="#000"/>
<rect x="234" y="162" width="1" height="4" fill="#000"/>
<rect x="240" y="162" width="1" height="4" fill="#000"/>
<rect x="246" y="158" width="1" height="8" fill="#000"/>
<rect x="252" y="162" width="1" height="4" fill="#000"/>
<rect x="258" y="162" width="1" height="4" fill="#000"/>
<rect x="264" y="162" width="1" height="4" fill="#000"/>
<rect x="270" y="162" width="1" height="4" fill="#000"/>
<rect x="276" y="150" width="1" height="16" fill="#000"/>
<rect x="282" y="162" width="1" height="4" fill="#000"/>
<rect x="288" y="162" width="1" height="4" fill="#000"/>
<rect x="294" y="162" width="1" height="4" fill="#000"/>
<rect x="300" y="162" width="1" height="4" fill="#000"/>
<rect x="306" y="158" width="1" height="8" fill="#000"/>
<rect x="312" y="162" width="1" height="4" fill="#000"/>
<rect x="318" y="162" width="1" height="4" fill="#000"/>
<rect x="324" y="162" width="1" height="4" fill="#000"/>
<rect x="330" y="162" width="1" height="4" fill="#000"/>
<rect x="336" y="150" width="1" height="16" fill="#000"/>
<rect x="342" y="162" width="1" height="4" fill="#000"/>
<rect x="349" y="162" width="1" height="4" fill="#000"/>
<rect x="355" y="162" width="1" height="4" fill="#000"/>
<rect x="361" y="162" width="1" height="4" fill="#000"/>
<rect x="367" y="158" width="1" height="8" fill="#000"/>
<rect x="373" y="162" width="1" height="4" fill="#000"/>
<rect x="379" y="162" width="1" height="4" fill="#000"/>
<rect x="385" y="162" width="1" height="4" fill="#000"/>
<rect x="391" y="162" width="1" height="4" fill="#000"/>
<rect x="397" y="150" width="1" height="16" fill="#000"/>
<rect x="403" y="162" width="1" height="4" fill="#000"/>
<rect x="409" y="162" width="1" height="4" fill="#000"/>
<rect x="415" y="162" width="1" height="4" fill="#000"/>
<rect x="421" y="162" width="1" height="4" fill="#000"/>
<rect x="427" y="158" width="1" height="8" fill="#000"/>
<rect x="433" y="162" width="1" height="4" fill="#000"/>
<rect x="439" y="162" width="1" height="4" fill="#000"/>
<rect x="445" y="162" width="1" height="4" fill="#000"/>
<rect x="451" y="162" width="1" height="4" fill="#000"/>
<rect x="457" y="150" width="1" height="16" fill="#000"/>
<rect x="464" y="162" width="1" height="4" fill="#000"/>
<rect x="470" y="162" width="1" height="4" fill="#000"/>
<rect x="476" y="162" width="1" height="4" fill="#000"/>
<rect x="482" y="162" width="1" height="4" fill="#000"/>
<rect x="488" y="158" width="1" height="8" fill="#000"/>
<rect x="494" y="162" width="1" height="4" fill="#000"/>
<rect x="500" y="162" width="1" height="4" fill="#000"/>
<rect x="506" y="162" width="1" height="4" fill="#000"/>
<rect x="512" y="162" width="1" height="4" fill="#000"/>
<rect x="518" y="150" width="1" height="16" fill="#000"/>
<rect x="524" y="162" width="1" height="4" fill="#000"/>
<rect x="530" y="162" width="1" height="4" fill="#000"/>
<rect x="536" y="162" width="1" height="4" fill="#000"/>
<rect x="542" y="162" width="1" height="4" fill="#000"/>
<rect x="548" y="158" width="1" height="8" fill="#000"/>
<rect x="554" y="162" width="1" height="4" fill="#000"/>
<rect x="560" y="162" width="1" height="4" fill="#000"/>
<rect x="566" y="162" width="1" height="4" fill="#000"/>
<rect x="572" y="162" width="1" height="4" fill="#000"/>
<rect x="579" y="150" width="1" height="16" fill="#000"/>
<rect x="585" y="162" width="1" height="4" fill="#000"/>
<rect x="591" y="162" width="1" height="4" fill="#000"/>
<rect x="597" y="162" width="1" height="4" fill="#000"/>
<rect x="603" y="162" width="1" height="4" fill="#000"/>
<rect x="609" y="158" width="1" height="8" fill="#000"/>
<rect x="615" y="162" width="1" height="4" fill="#000"/>
<rect x="621" y="162" width="1" height="4" fill="#000"/>
<rect x="627" y="162" width="1" height="4" fill="#000"/>
<rect x="633" y="162" width="1" height="4" fill="#000"/>
<rect x="639" y="150" width="1" height="16" fill="#000"/>
<rect x="645" y="162" width="1" height="4" fill="#000"/>
<rect x="651" y="162" width="1" height="4" fill="#000"/>
<rect x="657" y="162" width="1" height="4" fill="#000"/>
<rect x="663" y="162" width="1" height="4" fill="#000"/>
<rect x="669" y="158" width="1" height="8" fill="#000"/>
<rect x="675" y="162" width="1" height="4" fill="#000"/>
<rect x="681" y="162" width="1" height="4" fill="#000"/>
<rect x="687" y="162" width="1" height="4" fill="#000"/>
<rect x="694" y="162" width="1" height="4" fill="#000"/>
<rect x="700" y="150" width="1" height="16" fill="#000"/>
<rect x="706" y="162" width="1" height="4" fill="#000"/>
<rect x="712" y="162" width="1" height="4" fill="#000"/>
<rect x="718" y="162" width="1" height="4" fill="#000"/>
<rect x="724" y="162" width="1" height="4" fill="#000"/>
<rect x="730" y="158" width="1" height="8" fill="#000"/>
<rect x="736" y="162" width="1" height="4" fill="#000"/>
<rect x="742" y="162" width="1" height="4" fill="#000"/>
<rect x="748" y="162" width="1" height="4" fill="#000"/>
<rect x="754" y="162" width="1" height="4" fill="#000"/>
<rect x="760" y="150" width="1" height="16" fill="#000"/>
<rect x="766" y="162" width="1" height="4" fill="#000"/>
<rect x="772" y="162" width="1" height="4" fill="#000"/>
<rect x="778" y="162" width="1" height="4" fill="#000"/>
<rect x="784" y="162" width="1" height="4" fill="#000"/>
<rect x="790" y="158" width="1" height="8" fill="#000"/>
<rect x="796" y="162" width="1" height="4" fill="#000"/>
<rect x="802" y="162" width="1" height="4" fill="#000"/>
<rect x="808" y="162" width="1" height="4" fill="#000"/>
<rect x="815" y="162" width="1" height="4" fill="#000"/>
<rect x="821" y="150" width="1" height="16" fill="#000"/>
<rect x="827" y="162" width="1" height="4" fill="#000"/>
<rect x="833" y="162" width="1" height="4" fill="#000"/>
<rect x="839" y="162" width="1" height="4" fill="#000"/>
<rect x="845" y="162" width="1" height="4" fill="#000"/>
<rect x="851" y="158" width="1" height="8" fill="#000"/>
<rect x="857" y="162" width="1" height="4" fill="#000"/>
<rect x="863" y="162" width="1" height="4" fill="#000"/>
<rect x="869" y="162" width="1" height="4" fill="#000"/>
<rect x="875" y="162" width="1" height="4" fill="#000"/>
<rect x="881" y="150" width="1" height="16" fill="#000"/>
<rect x="887" y="162" width="1" height="4" fill="#000"/>
<text x="218" y="160" font-size="9.8" font-family="Liberation Sans" letter-spacing="-0.35" fill="#000">−100</text>
<text x="279" y="160" font-size="9.8" font-family="Liberation Sans" letter-spacing="-0.35" fill="#000">−80</text>
<text x="339" y="160" font-size="9.8" font-family="Liberation Sans" letter-spacing="-0.35" fill="#000">−60</text>
<text x="400" y="160" font-size="9.8" font-family="Liberation Sans" letter-spacing="-0.35" fill="#000">−40</text>
<text x="460" y="160" font-size="9.8" font-family="Liberation Sans" letter-spacing="-0.35" fill="#000">−20</text>
<text x="521" y="160" font-size="9.8" font-family="Liberation Sans" letter-spacing="-0.35" fill="#000">0</text>
<text x="582" y="160" font-size="9.8" font-family="Liberation Sans" letter-spacing="-0.35" fill="#000">20</text>
<text x="642" y="160" font-size="9.8" font-family="Liberation Sans" letter-spacing="-0.35" fill="#000">40</text>
<text x="703" y="160" font-size="9.8" font-family="Liberation Sans" letter-spacing="-0.35" fill="#000">60</text>
<text x="763" y="160" font-size="9.8" font-family="Liberation Sans" letter-spacing="-0.35" fill="#000">80</text>
<text x="824" y="160" font-size="9.8" font-family="Liberation Sans" letter-spacing="-0.35" fill="#000">100</text>
<text x="884" y="160" font-size="9.8" font-family="Liberation Sans" letter-spacing="-0.35" fill="#000">120</text>
</g><g clip-path="url(#vrc)">
<rect x="152" y="174" width="4" height="1" fill="#000"/>
<rect x="140" y="180" width="16" height="1" fill="#000"/>
<rect x="152" y="186" width="4" height="1" fill="#000"/>
<rect x="152" y="192" width="4" height="1" fill="#000"/>
<rect x="152" y="198" width="4" height="1" fill="#000"/>
<rect x="152" y="204" width="4" height="1" fill="#000"/>
<rect x="148" y="211" width="8" height="1" fill="#000"/>
<rect x="152" y="217" width="4" height="1" fill="#000"/>
<rect x="152" y="223" width="4" height="1" fill="#000"/>
<rect x="152" y="229" width="4" height="1" fill="#000"/>
<rect x="152" y="235" width="4" height="1" fill="#000"/>
<rect x="140" y="241" width="16" height="1" fill="#000"/>
<rect x="152" y="247" width="4" height="1" fill="#000"/>
<rect x="152" y="253" width="4" height="1" fill="#000"/>
<rect x="152" y="259" width="4" height="1" fill="#000"/>
<rect x="152" y="265" width="4" height="1" fill="#000"/>
<rect x="148" y="271" width="8" height="1" fill="#000"/>
<rect x="152" y="277" width="4" height="1" fill="#000"/>
<rect x="152" y="283" width="4" height="1" fill="#000"/>
<rect x="152" y="289" width="4" height="1" fill="#000"/>
<rect x="152" y="295" width="4" height="1" fill="#000"/>
<rect x="140" y="301" width="16" height="1" fill="#000"/>
<rect x="152" y="307" width="4" height="1" fill="#000"/>
<rect x="152" y="314" width="4" height="1" fill="#000"/>
<rect x="152" y="320" width="4" height="1" fill="#000"/>
<rect x="152" y="326" width="4" height="1" fill="#000"/>
<rect x="148" y="332" width="8" height="1" fill="#000"/>
<rect x="152" y="338" width="4" height="1" fill="#000"/>
<rect x="152" y="344" width="4" height="1" fill="#000"/>
<rect x="152" y="350" width="4" height="1" fill="#000"/>
<rect x="152" y="356" width="4" height="1" fill="#000"/>
<rect x="140" y="362" width="16" height="1" fill="#000"/>
<rect x="152" y="368" width="4" height="1" fill="#000"/>
<rect x="152" y="374" width="4" height="1" fill="#000"/>
<rect x="152" y="380" width="4" height="1" fill="#000"/>
<rect x="152" y="386" width="4" height="1" fill="#000"/>
<rect x="148" y="392" width="8" height="1" fill="#000"/>
<rect x="152" y="398" width="4" height="1" fill="#000"/>
<rect x="152" y="404" width="4" height="1" fill="#000"/>
<rect x="152" y="410" width="4" height="1" fill="#000"/>
<rect x="152" y="417" width="4" height="1" fill="#000"/>
<rect x="140" y="423" width="16" height="1" fill="#000"/>
<rect x="152" y="429" width="4" height="1" fill="#000"/>
<rect x="152" y="435" width="4" height="1" fill="#000"/>
<rect x="152" y="441" width="4" height="1" fill="#000"/>
<rect x="152" y="447" width="4" height="1" fill="#000"/>
<rect x="148" y="453" width="8" height="1" fill="#000"/>
<rect x="152" y="459" width="4" height="1" fill="#000"/>
<rect x="152" y="465" width="4" height="1" fill="#000"/>
<rect x="152" y="471" width="4" height="1" fill="#000"/>
<rect x="152" y="477" width="4" height="1" fill="#000"/>
<rect x="140" y="483" width="16" height="1" fill="#000"/>
<rect x="152" y="489" width="4" height="1" fill="#000"/>
<rect x="152" y="495" width="4" height="1" fill="#000"/>
<rect x="152" y="501" width="4" height="1" fill="#000"/>
<rect x="152" y="507" width="4" height="1" fill="#000"/>
<rect x="148" y="514" width="8" height="1" fill="#000"/>
<rect x="152" y="520" width="4" height="1" fill="#000"/>
<rect x="152" y="526" width="4" height="1" fill="#000"/>
<rect x="152" y="532" width="4" height="1" fill="#000"/>
<rect x="152" y="538" width="4" height="1" fill="#000"/>
<rect x="140" y="544" width="16" height="1" fill="#000"/>
<rect x="152" y="550" width="4" height="1" fill="#000"/>
<rect x="152" y="556" width="4" height="1" fill="#000"/>
<text transform="translate(150,178) rotate(-90)" font-size="9.8" font-family="Liberation Sans" letter-spacing="-0.35" fill="#000">−60</text>
<text transform="translate(150,239) rotate(-90)" font-size="9.8" font-family="Liberation Sans" letter-spacing="-0.35" fill="#000">−40</text>
<text transform="translate(150,299) rotate(-90)" font-size="9.8" font-family="Liberation Sans" letter-spacing="-0.35" fill="#000">−20</text>
<text transform="translate(150,360) rotate(-90)" font-size="9.8" font-family="Liberation Sans" letter-spacing="-0.35" fill="#000">0</text>
<text transform="translate(150,421) rotate(-90)" font-size="9.8" font-family="Liberation Sans" letter-spacing="-0.35" fill="#000">20</text>
<text transform="translate(150,481) rotate(-90)" font-size="9.8" font-family="Liberation Sans" letter-spacing="-0.35" fill="#000">40</text>
<text transform="translate(150,542) rotate(-90)" font-size="9.8" font-family="Liberation Sans" letter-spacing="-0.35" fill="#000">60</text>
</g></svg>

<!-- scrollbars -->
<div class="a" style="left:416px;top:556px;width:201px;height:2px;background:#858585;border-radius:1px"></div>
<div class="a" style="left:882px;top:332px;width:2px;height:54px;background:#858585;border-radius:1px"></div>
<!-- status bar -->
<div class="a" style="left:0;top:566px;width:894px;height:1px;background:#fff"></div>
<div class="a" style="left:0;top:567px;width:894px;height:1px;background:#e2e2e2"></div>
<div class="sep" style="left:427px;top:569px;height:17px"></div>
<div class="sep" style="left:535px;top:569px;height:17px"></div>
<div class="sep" style="left:583px;top:569px;height:17px"></div>
<div class="sep" style="left:771px;top:569px;height:17px"></div>
<div class="sep" style="left:802px;top:569px;height:17px"></div>
<div class="sep" style="left:838px;top:569px;height:17px"></div>
<div class="sep" style="left:873px;top:569px;height:17px"></div>
<div class="t lbl" style="left:432px;top:572px;font-size:11.8px;white-space:pre">( -119,  -4 )</div>
<div class="t lbl" style="left:543px;top:572px;font-size:11.8px">80%</div>
<div class="t lbl" style="left:588px;top:572px;font-size:12px">IN=43 mm, OUT=116 mm</div>
<div class="t lbl" style="left:807px;top:572px;font-size:12px">NUM</div>


<!-- dialog -->
<div class="a" style="left:229px;top:159px;width:436px;height:274px;border-radius:8px;background:#f0f0f0;box-shadow:0 0 0 1px rgba(0,0,0,0.18),0 18px 44px rgba(0,0,0,0.5);overflow:hidden">
  <div class="a" style="left:0;top:0;width:436px;height:25px;background:#fff"></div>
</div>
<div class="t" style="left:232px;top:165px;font-size:12.2px;color:#000">Configuração do diâmetro interno/externo</div>
<svg class="a" style="left:644px;top:165px" width="12" height="12"><path d="M1 1L11 11M11 1L1 11" stroke="#000" stroke-width="1"/></svg>
<!-- radios -->
<div class="a" style="left:255px;top:200px;width:13px;height:13px;border-radius:50%;border:1px solid #555;background:#fff"></div>
<div class="a" style="left:255px;top:223px;width:13px;height:13px;border-radius:50%;background:#0067c0"></div>
<div class="a" style="left:259px;top:227px;width:5px;height:5px;border-radius:50%;background:#fff"></div>
<div class="a" style="left:255px;top:246px;width:13px;height:13px;border-radius:50%;border:1px solid #555;background:#fff"></div>
<div class="t" style="left:271px;top:201px;font-size:12.3px;color:#000">CD/DVD de 8 cm</div>
<div class="t" style="left:271px;top:224px;font-size:12.3px;color:#000">CD/DVD de 12 cm</div>
<div class="t" style="left:271px;top:247px;font-size:12.3px;color:#000">CD/DVD personalizado</div>
<!-- group -->
<div class="a" style="left:243px;top:279px;width:406px;height:96px;border:1px solid #dcdcdc"></div>
<div class="t" style="left:249px;top:274px;font-size:12.4px;color:#000;background:#f0f0f0;padding:0 3px">Definições personalizadas</div>
<div class="t" style="left:324px;top:291px;font-size:12px;color:#000">Menor</div>
<div class="t" style="left:423px;top:291px;font-size:12px;color:#000">Maior</div>
<div class="t" style="left:250px;top:306px;font-size:12.3px;color:#000;line-height:15px">Diâmetro<br>interno</div>
<div class="t" style="left:250px;top:343px;font-size:12.3px;color:#000;line-height:15px">Diâmetro<br>externo</div>
<div class="a" style="left:342px;top:318px;width:98px;height:4px;background:#e7e7e7;border:1px solid #d6d6d6"></div>
<div class="a" style="left:410px;top:309px;width:10px;height:21px;background:#0078d7"></div>
<div class="a" style="left:342px;top:353px;width:98px;height:4px;background:#e7e7e7;border:1px solid #d6d6d6"></div>
<div class="a" style="left:422px;top:344px;width:10px;height:21px;background:#0078d7"></div>
<!-- spins -->
<div class="a" style="left:458px;top:305px;width:52px;height:24px;background:#fff;border:1px solid #e0e0e0;border-bottom:1px solid #8a8a8a"></div>
<div class="a" style="left:492px;top:305px;width:18px;height:24px;background:#f0f0f0;border:1px solid #cfcfcf"></div>
<div class="a" style="left:493px;top:306px;width:16px;height:10px;background:#e8e8e8;border:1px solid #c8c8c8"></div>
<div class="a" style="left:493px;top:317px;width:16px;height:10px;background:#e8e8e8;border:1px solid #c8c8c8"></div>
<svg class="a" style="left:497px;top:309px" width="8" height="4"><path d="M0 4L4 0L8 4Z" fill="#000"/></svg>
<svg class="a" style="left:497px;top:320px" width="8" height="4"><path d="M0 0L4 4L8 0Z" fill="#000"/></svg>
<div class="t" style="left:458px;top:310px;width:30px;text-align:right;font-size:12px;color:#000">43</div>
<div class="a" style="left:458px;top:340px;width:52px;height:24px;background:#fff;border:1px solid #e0e0e0;border-bottom:1px solid #8a8a8a"></div>
<div class="a" style="left:492px;top:340px;width:18px;height:24px;background:#f0f0f0;border:1px solid #cfcfcf"></div>
<div class="a" style="left:493px;top:341px;width:16px;height:10px;background:#e8e8e8;border:1px solid #c8c8c8"></div>
<div class="a" style="left:493px;top:352px;width:16px;height:10px;background:#e8e8e8;border:1px solid #c8c8c8"></div>
<svg class="a" style="left:497px;top:344px" width="8" height="4"><path d="M0 4L4 0L8 4Z" fill="#000"/></svg>
<svg class="a" style="left:497px;top:355px" width="8" height="4"><path d="M0 0L4 4L8 0Z" fill="#000"/></svg>
<div class="t" style="left:458px;top:345px;width:30px;text-align:right;font-size:12px;color:#000">116</div>
<div class="t" style="left:518px;top:317px;font-size:12.5px;color:#000">mm</div>
<div class="t" style="left:518px;top:352px;font-size:12.5px;color:#000">mm</div>
<!-- dialog buttons -->
<div class="a" style="left:554px;top:300px;width:86px;height:31px;background:#fbfbfb;border:1px solid #d0d0d0;border-bottom-color:#b0b0b0;border-radius:4px"></div>
<div class="t" style="left:553px;top:302px;width:86px;text-align:center;font-size:12px;line-height:14.5px;color:#000">Guardar<br>definições</div>
<div class="a" style="left:554px;top:335px;width:86px;height:31px;background:#fbfbfb;border:1px solid #d0d0d0;border-bottom-color:#b0b0b0;border-radius:4px"></div>
<div class="t" style="left:553px;top:337px;width:86px;text-align:center;font-size:12px;line-height:14.5px;color:#000">Lista de<br>definições</div>
<div class="a" style="left:288px;top:395px;width:86px;height:23px;background:#fdfdfd;border:1px solid #0067c0;border-radius:4px"></div>
<div class="t" style="left:288px;top:401px;width:86px;text-align:center;font-size:12.3px;color:#000">OK</div>
<div class="a" style="left:403px;top:395px;width:86px;height:23px;background:#fbfbfb;border:1px solid #d0d0d0;border-bottom-color:#b0b0b0;border-radius:4px"></div>
<div class="t" style="left:403px;top:401px;width:86px;text-align:center;font-size:12.3px;color:#000">Cancelar</div>
<div class="a" style="left:519px;top:395px;width:86px;height:23px;background:#fbfbfb;border:1px solid #d0d0d0;border-bottom-color:#b0b0b0;border-radius:4px"></div>
<div class="t" style="left:519px;top:401px;width:86px;text-align:center;font-size:12.3px;color:#000">Ajuda</div>


<!-- toolbar icons -->
<svg class="a" style="left:0;top:0" width="894" height="150">
<defs>
<linearGradient id="fold" x1="0" y1="0" x2="1" y2="0"><stop offset="0" stop-color="#e8c878"/><stop offset="1" stop-color="#f6dc98"/></linearGradient>
<linearGradient id="cdg" x1="0" y1="0" x2="1" y2="1"><stop offset="0" stop-color="#f4f4f4"/><stop offset="0.5" stop-color="#c8c8c8"/><stop offset="1" stop-color="#9a9a9a"/></linearGradient>
</defs>
<!-- Novo page -->
<path d="M23.5 64.5H33L36.5 68V82.5H23.5Z" fill="#fafafa" stroke="#707070"/>
<path d="M33 64.5V68H36.5" fill="#e0e0e0" stroke="#909090"/>
<!-- Abrir folder -->
<path d="M77.5 66.5L82 64.5L90.5 66.5V82.5L82 81.5L77.5 80Z" fill="url(#fold)" stroke="#a88848"/>
<path d="M77.5 66.5L84 68V83L77.5 80Z" fill="#e2b860" stroke="#a08040"/>
<path d="M82 72H87V69L93 74.5L87 80V77H82Z" fill="#3a58e8" stroke="#2030a0" stroke-width="0.6"/>
<!-- printer -->
<path d="M132 66L136 61.5L147 63.5L145 69Z" fill="#f4f4f4" stroke="#8a8a8a" stroke-width="0.8"/>
<path d="M127 72Q128 67 134 66.5L150 69Q153 71 153 76L151 81L140 79L128 76Z" fill="#d8d8d8" stroke="#707070" stroke-width="0.8"/>
<path d="M131 71L149 73.5L148 77L130 74.5Z" fill="#202020"/>
<path d="M126 80L130 76.5L143 78.5L140 85.5Z" fill="#fafafa" stroke="#888" stroke-width="0.8"/>
<!-- Guardar folder -->
<path d="M187.5 66.5L192 64.5L200.5 66.5V82.5L192 81.5L187.5 80Z" fill="url(#fold)" stroke="#a88848"/>
<path d="M187.5 66.5L194 68V83L187.5 80Z" fill="#e2b860" stroke="#a08040"/>
<path d="M203 76Q203 72 198 72H195V69L189 74L195 79V76H199Z" fill="#20c040" stroke="#108020" stroke-width="0.6"/>
<!-- Diametro -->
<rect x="252" y="64" width="1.3" height="12" fill="#0000e0"/>
<rect x="271" y="64" width="1.3" height="12" fill="#0000e0"/>
<rect x="253" y="67" width="18" height="1.3" fill="#0000e0"/>
<path d="M253.5 67.6L256 65.5V69.8Z M270.8 67.6L268.3 65.5V69.8Z" fill="#0000e0"/>
<clipPath id="dcd"><path d="M252.5 84A9.5 11.5 0 0 1 271.5 84Z"/></clipPath>
<path d="M252.5 84A9.5 11.5 0 0 1 271.5 84Z" fill="url(#cdg)"/>
<g clip-path="url(#dcd)" opacity="0.85"><path d="M262 84L262 70L267 70Z" fill="#f0b888"/><path d="M262 84L267 70L272 74Z" fill="#98e078"/><path d="M262 84L272 74L274 80Z" fill="#78a8f0"/></g>
<path d="M252.5 84A9.5 11.5 0 0 1 271.5 84" fill="none" stroke="#555" stroke-width="0.9"/>
<g clip-path="url(#dcd)"><circle cx="262" cy="83.5" r="3.2" fill="#fafafa" stroke="#888" stroke-width="0.7"/>
<circle cx="262" cy="83.5" r="1.3" fill="none" stroke="#888" stroke-width="0.7"/></g>
<rect x="252" y="84" width="20" height="3" fill="#f0f0f0" opacity="0"/>
<!-- undo / redo / clear (disabled) -->
<path d="M312.5 83L319 78V81H327Q331 81 331 85V88Q331 90 329 90H324V86H319V88Z" fill="#d4d4d4" stroke="#c6c6c6" stroke-width="0.7"/>
<path d="M374.5 83L368 78V81H360Q356 81 356 85V88Q356 90 358 90H363V86H368V88Z" fill="#d4d4d4" stroke="#c6c6c6" stroke-width="0.7"/>
<path d="M400 75V92Q406 95 412 92V75Z" fill="#dcdcdc" stroke="#c8c8c8" stroke-width="0.8"/>
<ellipse cx="406" cy="75" rx="6" ry="2.5" fill="#e8e8e8" stroke="#c8c8c8" stroke-width="0.8"/>
<ellipse cx="399" cy="86" rx="4" ry="5.5" fill="#ececec" stroke="#c8c8c8" stroke-width="0.8"/>
<!-- CD fit -->
<circle cx="453" cy="84" r="9.5" fill="url(#cdg)" stroke="#888" stroke-width="0.8"/>
<circle cx="453" cy="84" r="3" fill="#fff" stroke="#888" stroke-width="0.8"/>
<path d="M443.5 77V74.5H446 M460 74.5H462.5V77 M462.5 91V93.5H460 M446 93.5H443.5V91" fill="none" stroke="#222" stroke-width="1"/>
<!-- zoom in -->
<path d="M488 74.5H492V79.5H497V83.5H492V89H488V83.5H485V79.5H488Z" fill="#38b838" stroke="#1a7a1a" stroke-width="0.7"/>
<circle cx="497" cy="85" r="4.8" fill="#c4dce8" stroke="#222" stroke-width="1.3"/>
<path d="M500.5 88.5L504 92.5" stroke="#111" stroke-width="1.6"/>
<!-- zoom out -->
<rect x="527" y="80" width="16" height="3.5" fill="#38b838" stroke="#1a7a1a" stroke-width="0.7"/>
<circle cx="538" cy="86" r="4.8" fill="#c4dce8" stroke="#222" stroke-width="1.3"/>
<path d="M541.5 89.5L545 93.5" stroke="#111" stroke-width="1.6"/>
<!-- grid -->
<g stroke="#163c74" stroke-width="1.3">
<path d="M570.5 73.5V93M574.5 73.5V93M578.5 73.5V93M582.5 73.5V93M586.5 73.5V93"/>
<path d="M569 75.5H588M569 79.5H588M569 83.5H588M569 87.5H588M569 91.5H588"/>
</g>
<!-- disabled swap -->
<rect x="612" y="74" width="10.5" height="10.5" fill="#c8d4f4" stroke="#b8c4e4" stroke-width="0.6"/>
<rect x="619" y="82" width="10" height="9.5" fill="#f4f4f4" stroke="#d0d0d0" stroke-width="0.6"/>
<path d="M624 75.5Q628 75.5 628 79M626.5 78L628 80L629.5 78 M618 90Q614 90 614 87M612.5 88.5L614 86.5L615.5 88.5" fill="none" stroke="#bcbcbc" stroke-width="1"/>
</svg>


<!-- left panel icons -->
<svg class="a" style="left:0;top:150px" width="40" height="245">
<defs>
<linearGradient id="curg" x1="0" y1="0" x2="1" y2="1"><stop offset="0" stop-color="#d8d8d8"/><stop offset="0.6" stop-color="#606060"/><stop offset="1" stop-color="#202020"/></linearGradient>
<linearGradient id="sky" x1="0" y1="0" x2="0" y2="1"><stop offset="0" stop-color="#80b8e8"/><stop offset="0.45" stop-color="#b8d8f0"/><stop offset="0.5" stop-color="#58a048"/><stop offset="0.68" stop-color="#70b850"/><stop offset="0.7" stop-color="#60a8e0"/><stop offset="1" stop-color="#4890d8"/></linearGradient>
<radialGradient id="pinkr" cx="0.5" cy="0.5" r="0.5"><stop offset="0.25" stop-color="#fff"/><stop offset="0.35" stop-color="#f06070"/><stop offset="0.65" stop-color="#f8a0a8"/><stop offset="0.85" stop-color="#f06878"/><stop offset="1" stop-color="#e05060"/></radialGradient>
</defs>
<!-- cursor  (y offset 150) -->
<path d="M13.5 7.5V22.5L17 19L20.5 25.5L23 24L19.5 17.5H24Z" fill="url(#curg)" stroke="#111" stroke-width="0.9" stroke-linejoin="round"/>
<!-- modelo -->
<clipPath id="mclip"><ellipse cx="0" cy="0" rx="7.6" ry="9.6" transform="translate(17,55.5) rotate(-30)"/></clipPath>
<ellipse cx="0" cy="0" rx="8" ry="10" fill="#fafafa" stroke="#333" stroke-width="0.8" transform="translate(17,55.5) rotate(-30)"/>
<path d="M0 46L30 56V64L0 54Z" fill="#f05050" clip-path="url(#mclip)"/>
<ellipse cx="0" cy="0" rx="2.6" ry="3.2" fill="#f4f4f4" stroke="#666" stroke-width="0.6" transform="translate(17,55.5) rotate(-30)"/>
<!-- segundo plano -->
<clipPath id="sclip"><ellipse cx="0" cy="0" rx="7.6" ry="9.6" transform="translate(17,94.8) rotate(-30)"/></clipPath>
<ellipse cx="0" cy="0" rx="8" ry="10" fill="#5aa0e0" stroke="#333" stroke-width="0.8" transform="translate(17,94.8) rotate(-30)"/>
<path d="M0 80H30V96L0 88Z" fill="#b8d8f0" clip-path="url(#sclip)"/>
<path d="M0 88L30 96V102L0 94Z" fill="#58a048" clip-path="url(#sclip)"/>
<ellipse cx="0" cy="0" rx="2.6" ry="3.2" fill="#f4f4f4" stroke="#666" stroke-width="0.6" transform="translate(17,94.8) rotate(-30)"/>
<!-- imagem -->
<path d="M9.5 114.5L22.5 120V136L9.5 130.5Z" fill="#3070d0" stroke="#1a3a80" stroke-width="0.8"/>
<path d="M22.5 120L24 121V137L22.5 136Z" fill="#a0b8d8"/>
<circle cx="16" cy="125" r="2.8" fill="#f8d020" stroke="#b07000" stroke-width="0.8"/>
<circle cx="16" cy="125" r="1" fill="#905000"/>
<!-- texto -->
<defs><linearGradient id="ag" x1="0" y1="0" x2="1" y2="1"><stop offset="0" stop-color="#a8c0f8"/><stop offset="0.5" stop-color="#5a80e8"/><stop offset="1" stop-color="#2848c8"/></linearGradient></defs>
<g transform="translate(15.5,165) rotate(15)">
<text x="1.6" y="0.6" text-anchor="middle" font-family="Liberation Sans" font-weight="bold" font-size="21" fill="#1a38b0">A</text>
<text x="0" y="0" text-anchor="middle" font-family="Liberation Sans" font-weight="bold" font-size="21" fill="url(#ag)" stroke="#2a4ac0" stroke-width="0.5">A</text>
</g>
<!-- graficos -->
<path d="M14.5 178L24 181.5V191L17.5 189.5Z" fill="#f47a84" stroke="#b03040" stroke-width="0.6"/>
<ellipse cx="0" cy="0" rx="4.4" ry="5" transform="translate(22.5,193.5) rotate(-35)" fill="#f46a78" stroke="#b03040" stroke-width="0.6"/>
<path d="M11 188L16 184L16.5 189L13 192Z" fill="#fafafa" stroke="#444" stroke-width="0.6"/>
<path d="M11 188L16 184L15.5 186.5Z" fill="#e01818"/>
<path d="M13 192L10 198" stroke="#333" stroke-width="1"/>
<!-- suavizacao -->
<g transform="translate(17,227.5) rotate(-30)">
<ellipse cx="0" cy="0" rx="7.5" ry="10.5" fill="url(#pinkr)" stroke="#c04050" stroke-width="0.6"/>
<ellipse cx="0" cy="0" rx="2.8" ry="3.6" fill="#f8f0f0" stroke="#d05060" stroke-width="0.8"/>
</g>
</svg>


<!-- font row disabled icons -->
<svg class="a" style="left:0;top:0" width="894" height="150">
<defs><linearGradient id="lb" x1="0" y1="0" x2="1" y2="1"><stop offset="0" stop-color="#c4d0f4"/><stop offset="1" stop-color="#dfe6fa"/></linearGradient></defs>
<g stroke-width="1">
<rect x="480.5" y="127.5" width="7" height="6" fill="#f8f8f8" stroke="#bdbdbd"/>
<rect x="489.5" y="134.5" width="7" height="6" fill="#f8f8f8" stroke="#bdbdbd"/>
<rect x="483.5" y="130.5" width="10" height="7" fill="url(#lb)" stroke="#a8b8e8"/>
<rect x="508.5" y="132.5" width="11" height="8" fill="#f8f8f8" stroke="#bdbdbd"/>
<rect x="503.5" y="127.5" width="11" height="8" fill="url(#lb)" stroke="#a8b8e8"/>
<rect x="531.5" y="132.5" width="11" height="8" fill="url(#lb)" stroke="#a8b8e8"/>
<rect x="526.5" y="127.5" width="11" height="8" fill="#f8f8f8" stroke="#bdbdbd"/>
<rect x="552.5" y="130.5" width="10" height="7" fill="url(#lb)" stroke="#a8b8e8"/>
<rect x="549.5" y="127.5" width="7" height="6" fill="#f8f8f8" stroke="#bdbdbd"/>
<rect x="558.5" y="134.5" width="7" height="6" fill="#f8f8f8" stroke="#bdbdbd"/>
</g>
<path d="M578 134L582 130.5V137.5Z M595 134L591 130.5V137.5Z" fill="#b0b0b0"/>
<rect x="580" y="133" width="13" height="2" fill="#b0b0b0"/>
<rect x="584.5" y="128.5" width="4" height="11" fill="url(#lb)" stroke="#a8b8e8"/>
<path d="M609.5 127L606 131H613Z M609.5 141L606 137H613Z" fill="#b0b0b0"/>
<rect x="608.5" y="129" width="2" height="10" fill="#b0b0b0"/>
<rect x="603.5" y="132.5" width="12" height="3.5" fill="url(#lb)" stroke="#a8b8e8"/>
<!-- subferramenta -->
<path d="M777 128.5H783V139.5H777Z" fill="#fff" stroke="#333" stroke-width="1"/>
<path d="M780 131.5H785V128.5L790.5 134L785 139.5V136.5H780Z" fill="#4a7ef0" stroke="#1a40a0" stroke-width="0.7"/>

</svg>

<svg class="a" style="left:0;top:0" width="894" height="587"><!-- size grip -->
<g fill="#b8b8b8"><rect x="889" y="575" width="2" height="2"/><rect x="885" y="579" width="2" height="2"/><rect x="889" y="579" width="2" height="2"/><rect x="881" y="583" width="2" height="2"/><rect x="885" y="583" width="2" height="2"/><rect x="889" y="583" width="2" height="2"/></g></svg>
<!-- font row icons -->
<div class="t" style="left:256px;top:127px;font-family:'Liberation Serif',serif;font-size:15px;color:#000;width:15px;text-align:center">A</div>
<div class="a" style="left:255px;top:138px;width:17px;height:3px;background:#000"></div>
<div class="t" style="left:286px;top:127px;font-family:'Liberation Serif',serif;font-weight:bold;font-size:15px;color:#222">B</div>
<div class="t" style="left:310px;top:127px;font-family:'Liberation Serif',serif;font-style:italic;font-weight:bold;font-size:15px;color:#222">I</div>
<div class="t" style="left:333px;top:127px;font-family:'Liberation Serif',serif;font-weight:bold;font-size:14px;color:#222">U</div>
<div class="a" style="left:334px;top:140px;width:10px;height:1px;background:#222"></div>
<div class="t" style="left:356px;top:127px;font-family:'Liberation Serif',serif;font-weight:bold;font-size:15px;color:#333">S</div>
<div class="t" style="left:358px;top:128px;font-family:'Liberation Serif',serif;font-weight:bold;font-size:15px;color:rgba(120,120,120,.5)">S</div>
<div class="a" style="left:383px;top:127px;width:15px;height:1px;background:#333"></div><div class="a" style="left:383px;top:129px;width:15px;height:1px;background:#333"></div><div class="a" style="left:383px;top:132px;width:9px;height:1px;background:#1a1aa6"></div><div class="a" style="left:383px;top:134px;width:9px;height:1px;background:#1a1aa6"></div><div class="a" style="left:383px;top:136px;width:6px;height:1px;background:#1a1aa6"></div><div class="a" style="left:383px;top:140px;width:15px;height:1px;background:#333"></div><div class="a" style="left:406px;top:127px;width:15px;height:1px;background:#333"></div><div class="a" style="left:406px;top:129px;width:15px;height:1px;background:#333"></div><div class="a" style="left:409px;top:132px;width:9px;height:1px;background:#1a1aa6"></div><div class="a" style="left:409px;top:134px;width:9px;height:1px;background:#1a1aa6"></div><div class="a" style="left:411px;top:136px;width:5px;height:1px;background:#1a1aa6"></div><div class="a" style="left:406px;top:140px;width:15px;height:1px;background:#333"></div><div class="a" style="left:429px;top:127px;width:15px;height:1px;background:#333"></div><div class="a" style="left:429px;top:129px;width:15px;height:1px;background:#333"></div><div class="a" style="left:435px;top:132px;width:9px;height:1px;background:#1a1aa6"></div><div class="a" style="left:435px;top:134px;width:9px;height:1px;background:#1a1aa6"></div><div class="a" style="left:439px;top:136px;width:5px;height:1px;background:#1a1aa6"></div><div class="a" style="left:429px;top:140px;width:15px;height:1px;background:#333"></div><div class="a" style="left:452px;top:127px;width:15px;height:1px;background:#333"></div><div class="a" style="left:452px;top:129px;width:15px;height:1px;background:#333"></div><div class="a" style="left:452px;top:132px;width:15px;height:1px;background:#1a1aa6"></div><div class="a" style="left:452px;top:134px;width:15px;height:1px;background:#1a1aa6"></div><div class="a" style="left:452px;top:136px;width:15px;height:1px;background:#1a1aa6"></div><div class="a" style="left:452px;top:140px;width:15px;height:1px;background:#333"></div>
<svg class="a" style="left:0;top:0" width="30" height="30">
<path d="M14 8.5L19 9.5L23 11V21L19 22L14 20Z" fill="#c8c8c8" stroke="#808080" stroke-width="0.8"/>
<path d="M19 9.5V22" stroke="#909090" stroke-width="0.8"/>
<rect x="18.5" y="14" width="2" height="5" fill="#c02020"/>
<ellipse cx="13.7" cy="16.8" rx="4.8" ry="4.6" fill="#f0f0f0" stroke="#909090" stroke-width="0.7"/>
<path d="M9.2 15.5Q13 13.5 18 14.5V18Q13.5 17 9.5 19Z" fill="#2a9030"/>
<circle cx="13.7" cy="16.8" r="1.6" fill="#f8f8f8" stroke="#888" stroke-width="0.5"/>
</svg>
<!-- window controls -->
<div class="a" style="left:773px;top:15px;width:11px;height:1px;background:#777"></div>
<div class="a" style="left:819px;top:10px;width:10px;height:10px;border:1px solid #777"></div>
<svg class="a" style="left:864px;top:9px" width="12" height="12"><path d="M1 1L11 11M11 1L1 11" stroke="#777" stroke-width="1.1"/></svg>
<div id="frame"></div>
</div>
</body></html>
